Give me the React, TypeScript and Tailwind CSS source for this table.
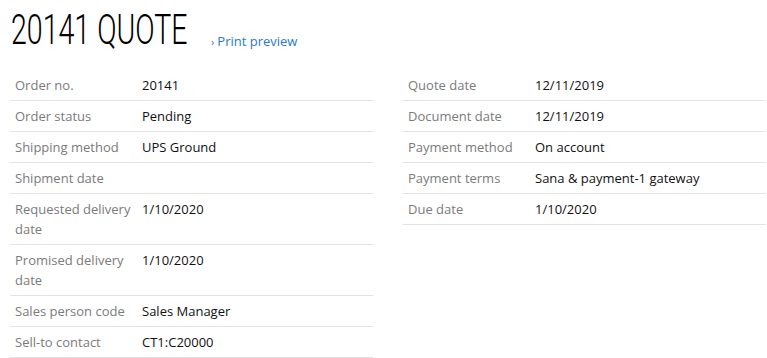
const left: [string, string][] = [
  ["Order no.", "20141"],
  ["Order status", "Pending"],
  ["Shipping method", "UPS Ground"],
  ["Shipment date", ""],
  ["Requested delivery date", "1/10/2020"],
  ["Promised delivery date", "1/10/2020"],
  ["Sales person code", "Sales Manager"],
  ["Sell-to contact", "CT1:C20000"],
];

const right: [string, string][] = [
  ["Quote date", "12/11/2019"],
  ["Document date", "12/11/2019"],
  ["Payment method", "On account"],
  ["Payment terms", "Sana & payment-1 gateway"],
  ["Due date", "1/10/2020"],
];

function InfoTable({ rows }: { rows: [string, string][] }) {
  return (
    <table className="w-[363px] border-collapse">
      <tbody>
        {rows.map(([label, value]) => (
          <tr key={label} className="border-b border-[#e3e3e3] align-top">
            <td className="w-[127px] px-[5px] py-[5px] text-[#7b7b7b]">{label}</td>
            <td className="px-[5px] py-[5px] text-[#111]">{value}</td>
          </tr>
        ))}
      </tbody>
    </table>
  );
}

export default function App() {
  return (
    <div className="bg-white min-h-[358px] pl-[10px] font-['Open_Sans',sans-serif] text-[13px] leading-[20px]">
      <div className="flex items-start h-[58px] pt-[6px]">
        <div className="w-[200px] h-[48px]">
          <h1 className="inline-block origin-left scale-x-[0.68] whitespace-nowrap font-['Roboto',sans-serif] text-[42px] leading-[48px] font-light text-black ml-[1px]">
            20141 QUOTE
          </h1>
        </div>
        <a href="#" className="text-[#2a7acb] ml-[1px] mt-[25px]">
          <span className="text-[11px] mr-[3px]">›</span>Print preview
        </a>
      </div>
      <div className="flex items-start gap-[30px] mt-[12px]">
        <InfoTable rows={left} />
        <InfoTable rows={right} />
      </div>
    </div>
  );
}
